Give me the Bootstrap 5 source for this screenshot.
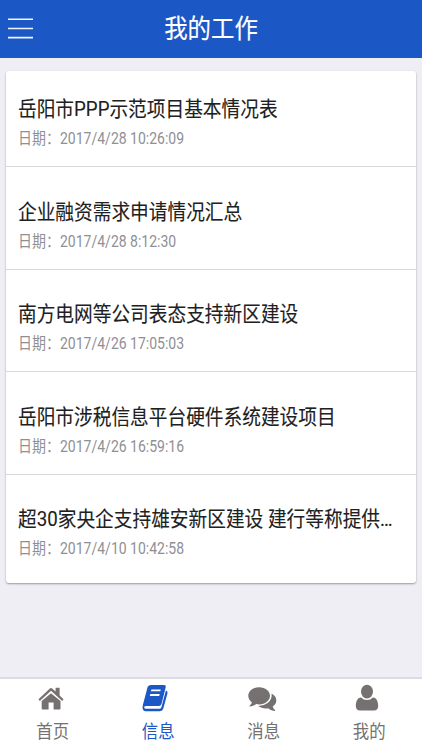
<!DOCTYPE html>
<html lang="zh-CN">
<head>
<meta charset="utf-8">
<meta name="viewport" content="width=device-width, initial-scale=1">
<title>我的工作</title>
<link href="https://cdn.jsdelivr.net/npm/bootstrap@5.3.0/dist/css/bootstrap.min.css" rel="stylesheet">
<style>
body { font-family: Roboto, "Noto Sans CJK SC", sans-serif; background: #efeef4; height: 750px; overflow: hidden; }
.app-head { background: #1b57c5; height: 58px; color: #fff; }
.menu-btn { width: 40px; height: 58px; left: 0; top: 0; }
.tall { display: block; transform: scaleY(1.12); }
.app-title { font-size: 23.4px; line-height: 30px; font-weight: 400; -webkit-text-stroke: .15px; }
.work-card { margin: 13px 6px 0; height: 512px; border-radius: 3px; background: #fff; box-shadow: 0 1px 2px rgba(0,0,0,.36); }
.work-item { height: 102.5px; padding: 29.5px 12px 0; border-bottom: 1px solid #d9d9dc; }
.work-item:first-child { height: 96px; padding-top: 23px; }
.work-item:last-child { border-bottom: 0; }
.item-name { font-size: 18.7px; line-height: 30px; color: #202020; -webkit-text-stroke: .1px; white-space: nowrap; }
.item-date { font-size: 14px; line-height: 28px; color: #8f8f94; }
.tabs-bar { height: 73px; background: #fff; border-top: 2px solid #dddde1; }
.tab-link { color: #757170; text-decoration: none; padding-top: 5px; }
.tab-link.current { color: #1b57c5; }
.tab-link svg { width: 30px; height: 30px; margin-right: 4px; }
.tab-text { font-size: 16.4px; line-height: 24px; margin-top: 6px; }
</style>
<script src="https://cdn.jsdelivr.net/npm/bootstrap@5.3.0/dist/js/bootstrap.bundle.min.js"></script>
</head>
<body class="d-flex flex-column">
<header class="app-head position-relative d-flex align-items-center justify-content-center flex-shrink-0">
  <button class="menu-btn position-absolute border-0 bg-transparent p-0" aria-label="菜单">
    <svg class="d-block" width="40" height="58" stroke="#eef5ff" stroke-width="1.6"><path d="M8 19.2h25M8 28.5h25M8 37.6h25"/></svg>
  </button>
  <h1 class="app-title tall m-0">我的工作</h1>
</header>
<main class="flex-grow-1">
  <div class="work-card">
    <div class="work-item"><div class="item-name tall">岳阳市PPP示范项目基本情况表</div><div class="item-date tall">日期：2017/4/28 10:26:09</div></div>
    <div class="work-item"><div class="item-name tall">企业融资需求申请情况汇总</div><div class="item-date tall">日期：2017/4/28 8:12:30</div></div>
    <div class="work-item"><div class="item-name tall">南方电网等公司表态支持新区建设</div><div class="item-date tall">日期：2017/4/26 17:05:03</div></div>
    <div class="work-item"><div class="item-name tall">岳阳市涉税信息平台硬件系统建设项目</div><div class="item-date tall">日期：2017/4/26 16:59:16</div></div>
    <div class="work-item"><div class="item-name tall">超30家央企支持雄安新区建设 建行等称提供…</div><div class="item-date tall">日期：2017/4/10 10:42:58</div></div>
  </div>
</main>
<nav class="tabs-bar d-flex flex-shrink-0">
  <a class="tab-link col-3 d-flex flex-column align-items-center" href="#">
    <svg viewBox="0 0 30 30" fill="currentColor"><path d="M15 9.2 5.7 17v7.6q0 .9.9.9h6v-7h5v7h6q.9 0 .9-.9V17z"/><path d="M2.500 15.300 13.600 4.700q1.400-1.200 2.800 0l3.200 2.900V3.800h4v7.700l3.900 3.800-1.300 1.700L15 6.700 3.800 17z"/></svg>
    <span class="tab-text tall">首页</span>
  </a>
  <a class="tab-link current col-3 d-flex flex-column align-items-center" href="#">
    <svg viewBox="0 0 30 30" fill="currentColor"><path fill-rule="evenodd" d="M10.200 1h13q2 0 1.500 2.200L20.500 20q-.6 2-2.700 2H5.300q-1.800 0-2.100 1.100-.4 1.600 1.600 1.600h13.400q1.700 0 2.200-1.500l4.500-16.600q2.100.6 1.600 2.600l-4.200 15.400q-.7 2.600-3.400 2.600H4.800q-3.200 0-3.300-3.700l.5-2.900L6.600 3q.8-2 3.600-2zM10.400 5.400l-.5 1.900h9.400l.5-1.900zM9.300 10l-.5 1.900h9.400l.5-1.900z"/></svg>
    <span class="tab-text tall">信息</span>
  </a>
  <a class="tab-link col-3 d-flex flex-column align-items-center" href="#">
    <svg viewBox="0 0 30 30" fill="currentColor"><path d="M12.200 3.200c6 0 10.800 3.800 10.800 8.600s-4.800 8.600-10.800 8.600q-1.500 0-2.900-.3-2.800 2.100-6.300 2.500c-.7 0-.6-.6-.2-1q1.800-1.600 2.100-3.200C2.700 16.700 1.300 14.400 1.300 11.800c0-4.800 4.900-8.600 10.900-8.600z"/><path d="M24.600 9.600q4.700 2.700 4.700 6.800 0 3.400-3.600 6 .3 1.700 2.200 3.600c.5.5.2 1.100-.3 1-3.600-.4-5.500-2-6.400-2.700-3.800.6-7.500-.2-9.900-2.300C19.300 21.700 25.500 17.200 24.600 9.600z"/></svg>
    <span class="tab-text tall">消息</span>
  </a>
  <a class="tab-link col-3 d-flex flex-column align-items-center" href="#">
    <svg viewBox="0 0 30 30" fill="currentColor"><ellipse cx="15" cy="7.600" rx="6" ry="6.900"/><path d="M9.100 13.400Q11.500 16 15 16t5.900-2.600c4.100 0 5.300 4.900 5.300 8.600 0 3.100-1.900 4.500-4.100 4.500H7.900c-2.200 0-4.100-1.400-4.100-4.500 0-3.700 1.200-8.600 5.300-8.600z"/></svg>
    <span class="tab-text tall">我的</span>
  </a>
</nav>
</body>
</html>
